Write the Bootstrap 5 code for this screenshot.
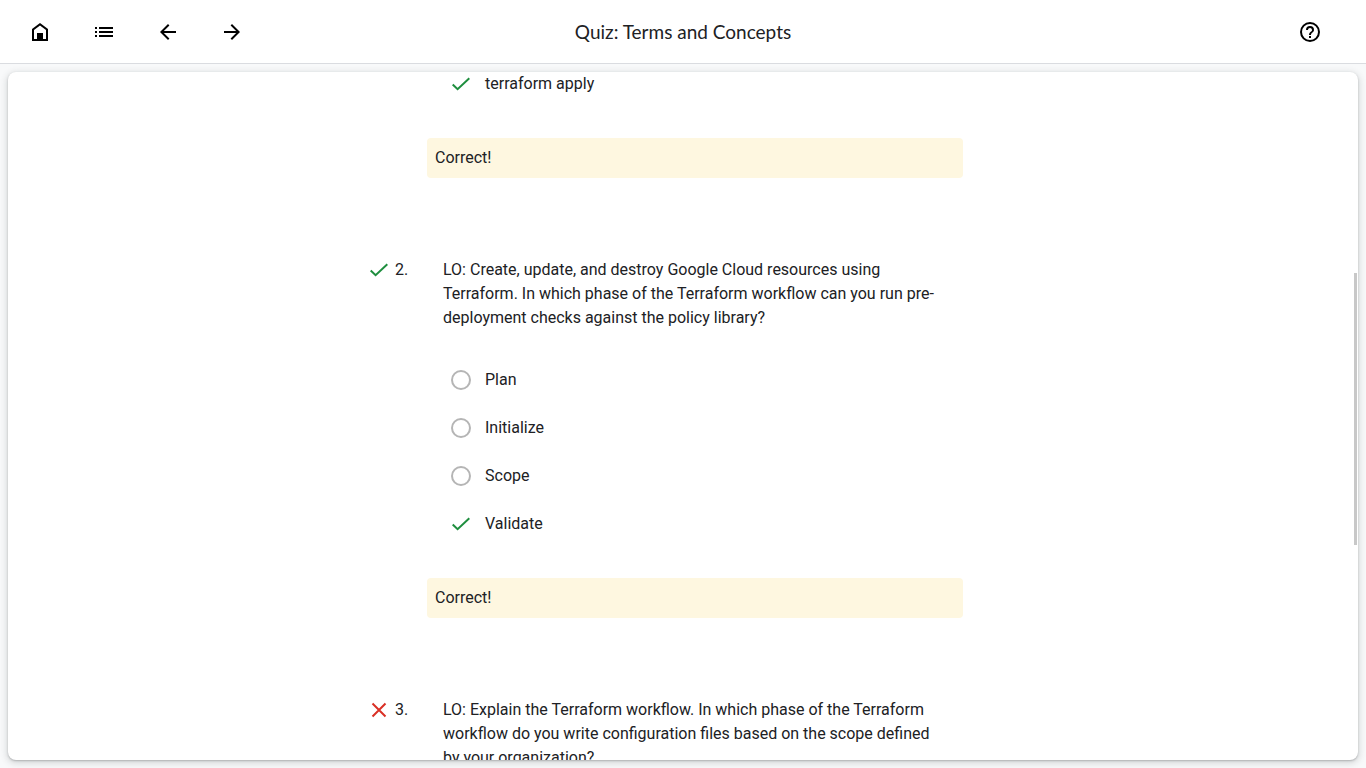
<!DOCTYPE html>
<html lang="en">
<head>
<meta charset="utf-8">
<meta name="viewport" content="width=device-width, initial-scale=1">
<title>Quiz: Terms and Concepts</title>
<link href="https://cdn.jsdelivr.net/npm/bootstrap@5.3.0/dist/css/bootstrap.min.css" rel="stylesheet">
<style>
  body { background: #f8f9fa; color: #202124; font-family: Roboto, "Liberation Sans", sans-serif; font-size: 16px; line-height: 24px; }
  .topbar { height: 64px; border-bottom: 1px solid #dadce0; }
  .topbar h1 { font-family: "Google Sans", Lato, sans-serif; font-size: 19px; line-height: 24px; }
  .tool { width: 48px; height: 48px; color: #000; }
  svg { display: block; fill: currentColor; flex: none; }
  .sheet { border-radius: 8px; box-shadow: 0 1px 2px rgba(60,64,67,.3), 0 2px 6px 2px rgba(60,64,67,.15); }
  .quiz { max-width: 640px; padding: 0 40px 0 0; }
  .marker { width: 64px; padding-left: 6px; gap: 6px; }
  .question { padding: 0 16px; margin-bottom: 26px; }
  .option { height: 48px; gap: 14px; }
  .option.clipped { height: 24px; }
  .option .form-check-input { width: 20px; height: 20px; border: 2px solid #b5b5b5; }
  .choices { padding: 0 24px; margin-bottom: 30px; }
  .choices.first { margin-bottom: 42px; }
  .feedback { background: #fef7e0; border-radius: 4px; padding: 8px; margin-bottom: 80px; }
  .ok, .bad { fill: none; stroke: currentColor; stroke-width: 2; }
  .ok { color: #1e8e3e; }
  .bad { color: #d93025; }
  .thumb { right: 1px; top: 201px; width: 3px; height: 272px; background: #c8c8c8; }
</style>
</head>
<body class="d-flex flex-column vh-100 overflow-hidden">
<header class="topbar bg-white d-flex align-items-center justify-content-between px-3 flex-shrink-0">
  <nav class="d-flex gap-3 col">
    <a href="#" class="tool d-flex align-items-center justify-content-center" aria-label="Home"><svg width="24" height="24" viewBox="0 0 24 24"><path d="M12 3 4 9v12h16V9zm6 16h-3v-6H9v6H6v-9l6-4.500L18 10z"/><path d="M9 13h6v7H9z"/></svg></a>
    <button class="tool btn border-0 p-0 d-flex align-items-center justify-content-center" aria-label="Outline"><svg width="24" height="24" viewBox="0 0 24 24"><path d="M7 7h14v2H7zm0 4h14v2H7zm0 4h14v2H7zM3 7h2v2H3zm0 4h2v2H3zm0 4h2v2H3z"/></svg></button>
    <a href="#" class="tool d-flex align-items-center justify-content-center" aria-label="Previous"><svg width="24" height="24" viewBox="0 0 24 24"><path d="M20 11H7.830l5.590-5.590L12 4l-8 8 8 8 1.410-1.410L7.830 13H20z"/></svg></a>
    <a href="#" class="tool d-flex align-items-center justify-content-center" aria-label="Next"><svg width="24" height="24" viewBox="0 0 24 24"><path d="m12 4-1.410 1.410L16.170 11H4v2h12.170l-5.580 5.590L12 20l8-8z"/></svg></a>
  </nav>
  <h1 class="m-0 fw-normal">Quiz: Terms and Concepts</h1>
  <div class="col d-flex justify-content-end">
    <button class="tool btn border-0 p-0 me-3 d-flex align-items-center justify-content-center" aria-label="Help"><svg width="24" height="24" viewBox="0 0 24 24"><path d="M11 18h2v-2h-2zm1-16a10 10 0 1 0 0 20 10 10 0 0 0 0-20m0 18a8 8 0 1 1 0-16 8 8 0 0 1 0 16m0-14a4 4 0 0 0-4 4h2c0-1.100.9-2 2-2s2 .9 2 2c0 2-3 1.750-3 5h2c0-2.250 3-2.500 3-5a4 4 0 0 0-4-4"/></svg></button>
  </div>
</header>
<main class="flex-fill p-2 overflow-hidden">
  <div class="sheet bg-white h-100 overflow-hidden position-relative">
    <div class="quiz mx-auto">
      <section class="d-flex">
        <div class="marker flex-shrink-0"></div>
        <div class="flex-fill">
          <div class="choices first">
            <div class="option clipped d-flex align-items-center"><svg class="ok" width="20" height="20" viewBox="0 0 20 20"><path d="M1.700 10.500 6.600 15.200 18.300 4.300"/></svg><span>terraform apply</span></div>
          </div>
          <div class="feedback">Correct!</div>
        </div>
      </section>
      <section class="d-flex">
        <div class="marker d-flex align-items-center align-self-start flex-shrink-0"><svg class="ok" width="20" height="20" viewBox="0 0 20 20"><path d="M1.700 10.500 6.600 15.200 18.300 4.300"/></svg><span>2.</span></div>
        <div class="flex-fill">
          <p class="question">LO: Create, update, and destroy Google Cloud resources using Terraform. In which phase of the Terraform workflow can you run pre-deployment checks against the policy library?</p>
          <div class="choices">
            <div class="option d-flex align-items-center"><input class="form-check-input m-0 flex-shrink-0" type="radio" name="q2" id="plan"><label for="plan">Plan</label></div>
            <div class="option d-flex align-items-center"><input class="form-check-input m-0 flex-shrink-0" type="radio" name="q2" id="initialize"><label for="initialize">Initialize</label></div>
            <div class="option d-flex align-items-center"><input class="form-check-input m-0 flex-shrink-0" type="radio" name="q2" id="scope"><label for="scope">Scope</label></div>
            <div class="option d-flex align-items-center"><svg class="ok" width="20" height="20" viewBox="0 0 20 20"><path d="M1.700 10.500 6.600 15.200 18.300 4.300"/></svg><span>Validate</span></div>
          </div>
          <div class="feedback">Correct!</div>
        </div>
      </section>
      <section class="d-flex">
        <div class="marker d-flex align-items-center align-self-start flex-shrink-0"><svg class="bad" width="20" height="20" viewBox="0 0 20 20"><path d="m3.500 3.500 13 13m0-13-13 13"/></svg><span>3.</span></div>
        <div class="flex-fill">
          <p class="question">LO: Explain the Terraform workflow. In which phase of the Terraform workflow do you write configuration files based on the scope defined by your organization?</p>
        </div>
      </section>
    </div>
    <div class="thumb position-absolute"></div>
  </div>
</main>
<script src="https://cdn.jsdelivr.net/npm/bootstrap@5.3.0/dist/js/bootstrap.bundle.min.js"></script>
</body>
</html>
